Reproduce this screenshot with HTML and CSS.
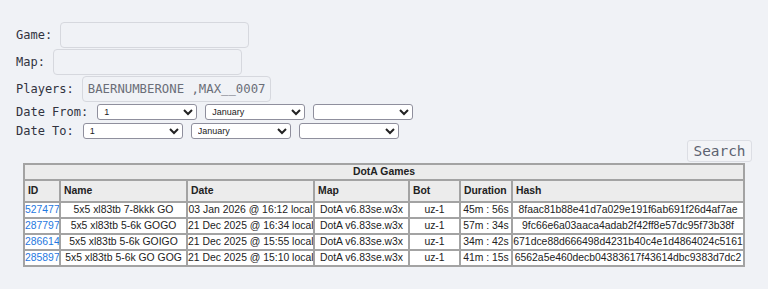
FILE: index.html
```html
<!DOCTYPE html>
<html lang="en">
<head>
  <meta charset="UTF-8">
  <title>DotA Games</title>
  <link rel="stylesheet" href="styles.css">
</head>
<body>
  <form class="filters">
    <div class="row">
      <label for="game">Game:</label>
      <input type="text" id="game" class="field">
    </div>
    <div class="row">
      <label for="map">Map:</label>
      <input type="text" id="map" class="field">
    </div>
    <div class="row">
      <label for="players">Players:</label>
      <input type="text" id="players" class="field" value="BAERNUMBERONE ,MAX__0007">
    </div>
    <div class="row date-row">
      <label>Date From:</label>
      <select><option>1</option></select>
      <select><option>January</option></select>
      <select><option></option></select>
    </div>
    <div class="row date-row">
      <label>Date To:</label>
      <select><option>1</option></select>
      <select><option>January</option></select>
      <select><option></option></select>
    </div>
    <div class="actions">
      <button type="button" class="search-btn">Search</button>
    </div>
  </form>

  <table class="games">
    <colgroup>
      <col class="c-id">
      <col class="c-name">
      <col class="c-date">
      <col class="c-map">
      <col class="c-bot">
      <col class="c-dur">
      <col class="c-hash">
    </colgroup>
    <tr>
      <th colspan="7" class="title">DotA Games</th>
    </tr>
    <tr>
      <th>ID</th>
      <th>Name</th>
      <th>Date</th>
      <th>Map</th>
      <th>Bot</th>
      <th>Duration</th>
      <th>Hash</th>
    </tr>
    <tr>
      <td class="id"><a href="#">527477</a></td>
      <td>5x5 xl83tb 7-8kkk GO</td>
      <td>03 Jan 2026 @ 16:12 local</td>
      <td>DotA v6.83se.w3x</td>
      <td>uz-1</td>
      <td>45m : 56s</td>
      <td>8faac81b88e41d7a029e191f6ab691f26d4af7ae</td>
    </tr>
    <tr>
      <td class="id"><a href="#">287797</a></td>
      <td>5x5 xl83tb 5-6k GOGO</td>
      <td>21 Dec 2025 @ 16:34 local</td>
      <td>DotA v6.83se.w3x</td>
      <td>uz-1</td>
      <td>57m : 34s</td>
      <td>9fc66e6a03aaca4adab2f42ff8e57dc95f73b38f</td>
    </tr>
    <tr>
      <td class="id"><a href="#">286614</a></td>
      <td>5x5 xl83tb 5-6k GOIGO</td>
      <td>21 Dec 2025 @ 15:55 local</td>
      <td>DotA v6.83se.w3x</td>
      <td>uz-1</td>
      <td>34m : 42s</td>
      <td>671dce88d666498d4231b40c4e1d4864024c5161</td>
    </tr>
    <tr>
      <td class="id"><a href="#">285897</a></td>
      <td>5x5 xl83tb 5-6k GO GOG</td>
      <td>21 Dec 2025 @ 15:10 local</td>
      <td>DotA v6.83se.w3x</td>
      <td>uz-1</td>
      <td>41m : 15s</td>
      <td>6562a5e460decb04383617f43614dbc9383d7dc2</td>
    </tr>
  </table>
</body>
</html>
```

FILE: styles.css
```css
* {
  box-sizing: border-box;
}
body {
  margin: 0;
  padding: 21px 16px 0;
  background: #f0f2f6;
  font-family: "DejaVu Sans Mono", monospace;
  font-size: 12px;
  color: #31333f;
}

/* Filter form */
.filters {
  display: flex;
  flex-direction: column;
}
.row {
  display: flex;
  align-items: center;
  gap: 8px;
  height: 27px;
}
.row label {
  color: #31333f;
}
.field {
  width: 189px;
  height: 26px;
  border: 1px solid #d6d8de;
  border-radius: 4px;
  background: #f0f2f6;
  font-family: "DejaVu Sans Mono", monospace;
  font-size: 12.3px;
  color: #6b6e78;
  padding: 0 5px;
}
.date-row {
  height: 19px;
}
.date-row label {
  margin-right: 1px;
}
.date-row select {
  width: 100px;
  height: 16px;
  margin: 0;
  padding: 0 2px;
  border: 1px solid #8f8f9d;
  border-radius: 3px;
  background: #fff;
  font-family: "Liberation Sans", Arial, sans-serif;
  font-size: 9px;
  color: #222;
}
.actions {
  display: flex;
  justify-content: flex-end;
}
.search-btn {
  width: 65px;
  height: 22px;
  padding: 0;
  border: 1px solid #dcdee4;
  border-radius: 3px;
  background: #f3f4f7;
  font-family: "DejaVu Sans Mono", monospace;
  font-size: 14.4px;
  color: #5d6270;
}

/* Games table */
.games {
  width: 722px;
  margin: 1px auto 0;
  table-layout: fixed;
  border-collapse: separate;
  border-spacing: 0;
  border: 1px solid #a3a3a3;
  font-family: "Liberation Sans", Arial, sans-serif;
  font-size: 10.4px;
  line-height: 12px;
  color: #222;
}
.c-id { width: 36px; }
.c-name { width: 127px; }
.c-date { width: 127px; }
.c-map { width: 95px; }
.c-bot { width: 51px; }
.c-dur { width: 52px; }
.c-hash { width: 232px; }

.games th,
.games td {
  border: 1px solid #a3a3a3;
  white-space: nowrap;
  overflow: hidden;
}
.games th {
  background: #ececec;
  text-align: left;
  padding: 4px 3px;
  font-weight: bold;
}
.games th.title {
  text-align: center;
  padding: 1px;
}
.games td {
  background: #fff;
  text-align: center;
  padding: 1px 0;
}
.games td.id {
  text-align: left;
}
.games a {
  color: #1f78e0;
  text-decoration: none;
}
```
